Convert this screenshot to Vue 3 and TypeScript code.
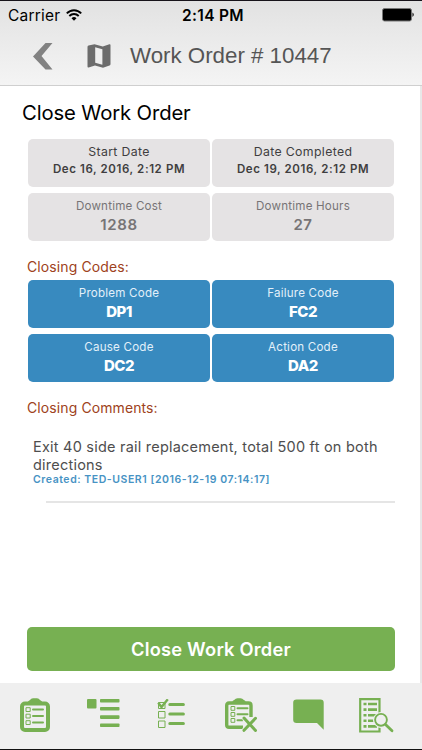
<script setup lang="ts">
interface Tile {
  label: string
  value: string
  kind: string
}

const details: Tile[] = [
  { label: 'Start Date', value: 'Dec 16, 2016, 2:12 PM', kind: 'date' },
  { label: 'Date Completed', value: 'Dec 19, 2016, 2:12 PM', kind: 'date' },
  { label: 'Downtime Cost', value: '1288', kind: 'metric' },
  { label: 'Downtime Hours', value: '27', kind: 'metric' },
]

const codes: Tile[] = [
  { label: 'Problem Code', value: 'DP1', kind: 'code' },
  { label: 'Failure Code', value: 'FC2', kind: 'code' },
  { label: 'Cause Code', value: 'DC2', kind: 'code' },
  { label: 'Action Code', value: 'DA2', kind: 'code' },
]
</script>

<template>
  <div class="screen">
    <header class="top">
      <div class="status">
        <div class="carrier">
          <span>Carrier</span>
          <svg width="16" height="12" viewBox="0 0 16 12" fill="none" stroke="#000" stroke-width="1.9">
            <path d="M.8 4.4C4.8.1 11.2.1 15.2 4.4" />
            <path d="M3.3 7C6 4.300 10 4.300 12.700 7" />
            <path d="M8 11.700 5.500 9.200Q8 7 10.500 9.200Z" fill="#000" stroke="none" />
          </svg>
        </div>
        <span class="clock">2:14 PM</span>
        <svg class="battery" width="33" height="14" viewBox="0 0 33 14">
          <rect x=".5" y=".5" width="29" height="12.500" rx="2" fill="#000" stroke="#777" />
          <path d="M30.500 4.500q2.500 2.200 0 4.500z" />
        </svg>
      </div>
      <div class="nav">
        <svg class="back" width="20" height="27" viewBox="0 0 20 27"><path d="M12.500 0H19.500L8.500 13 19.500 26.500H12.500L0 13.500z" fill="#828282" /></svg>
        <svg class="map" width="24" height="24" viewBox="0 0 24 24">
          <path d="M.5 3Q.5 2 1.500 1.600L7.500.3 15.800 2.500 22.400.2Q23.500 0 23.500 1V20Q23.500 21.200 22.500 21.600L16 23.700 8 21.400 1.600 23.500Q.5 23.700.5 22.500z" fill="#6c6c6c" />
          <path d="M8.200 3.200 15.400 5.300V20.800L8.200 18.800z" fill="#eee" />
        </svg>
        <h1>Work Order # 10447</h1>
      </div>
    </header>

    <main>
      <h2>Close Work Order</h2>
      <div class="tiles">
        <div v-for="t in details" :key="t.label" class="tile" :class="t.kind">
          <span class="label">{{ t.label }}</span>
          <b>{{ t.value }}</b>
        </div>
      </div>
      <h3 class="codes-title">Closing Codes:</h3>
      <div class="tiles">
        <div v-for="t in codes" :key="t.label" class="tile" :class="t.kind">
          <span class="label">{{ t.label }}</span>
          <b>{{ t.value }}</b>
        </div>
      </div>
      <h3 class="comments-title">Closing Comments:</h3>
      <article>
        <p>Exit 40 side rail replacement, total 500 ft on both directions</p>
        <small>Created: TED-USER1 [2016-12-19 07:14:17]</small>
      </article>
      <div class="divider"></div>
      <button type="button">Close Work Order</button>
    </main>

    <footer>
      <svg width="30" height="34" viewBox="0 0 30 34" fill="none" stroke="#77b052">
        <rect x="2" y="5.500" width="26" height="26.500" rx="3" stroke-width="4" />
        <path d="M7 6Q8 2.500 10 2Q11 .2 13 .2H17Q19 .2 20 2Q22 2.500 23 6z" fill="#77b052" stroke="none" />
        <path d="M6 9.700h4.200v3.800H6zM6 16.200h4.200V20H6zM6 22.700h4.200v3.800H6z" />
        <path d="M13 11.500h10M13 18h10M13 24.500h10" stroke-width="2" stroke-linecap="round" />
      </svg>
      <svg width="33" height="30" viewBox="0 0 33 30" fill="#77b052">
        <rect x="0" y="0" width="9.500" height="9.500" rx="1" />
        <rect x="13" y="0" width="19.500" height="3.600" rx=".8" />
        <rect x="13" y="8" width="19.500" height="3.600" rx=".8" />
        <rect x="13" y="16.300" width="19.500" height="3.600" rx=".8" />
        <rect x="13" y="24.500" width="19.500" height="3.600" rx=".8" />
      </svg>
      <svg width="28" height="30" viewBox="0 0 28 30" fill="none" stroke="#77b052">
        <path d="M1.500 3.500h6.500v6H1.500zM1.500 12.500h6.500v6.500H1.500zM1.500 22h6.500v6.500H1.500z" />
        <path d="M12.800 5.500h13.600M12.800 15h13.600M12.800 24.500h13.600" stroke-width="3" stroke-linecap="round" />
        <path d="M1.200 3.800 4.500 8 10.800.3" stroke-width="2.400" />
      </svg>
      <svg width="32" height="34" viewBox="0 0 32 34" fill="none" stroke="#77b052">
        <path d="M18 29.200H4Q1.700 29.200 1.700 27V7.500Q1.700 5 4 5H23.500Q26 5 26 7.500V19" stroke-width="3.400" />
        <path d="M7 5Q7.500 2.200 9.500 1.800Q10.500.2 12.500.2H15.500Q17.500.2 18.500 1.800Q20.500 2.200 21 5z" fill="#77b052" stroke="none" />
        <path d="M6 8.500h3.800v3.800H6zM6 14.500h3.800v3.800H6zM6 20.500h3.800v3.800H6z" />
        <path d="M12.500 10.300h10M12.500 16.300h10M12.500 22.300h5" stroke-width="2" stroke-linecap="round" />
        <path d="M19 20 31 32.500M30.500 20.300 19 32.300" stroke="#efefef" stroke-width="5" />
        <path d="M19 20 30.500 32.500M30.500 20.300 19 32.300" stroke-width="3" stroke-linecap="round" />
      </svg>
      <svg width="31" height="32" viewBox="0 0 31 32"><path d="M3.500.5H27.500Q30.700.5 30.700 3.500V30.800L24 24H3.500Q.2 24 .2 21V3.500Q.2.500 3.500.5z" fill="#77b052" /></svg>
      <svg width="35" height="35" viewBox="0 0 35 35" fill="none" stroke="#77b052">
        <path d="M1.200 1.200H20.500V33.500H1.200z" stroke-width="2.200" />
        <path d="M4.500 6h3M4.500 11.600h3M4.500 17.200h3M4.500 22.800h3M4.500 28.400h3M9 6h9M9 11.600h9M9 17.200h8M9 22.800h8M9 28.400h9" stroke-width="2.600" />
        <circle cx="22" cy="22" r="7.500" fill="#efefef" stroke="#efefef" />
        <path d="M26.500 26.500 33 32.700" stroke-width="2.800" stroke-linecap="round" />
        <circle cx="22" cy="21.800" r="5.900" stroke-width="1.900" />
      </svg>
    </footer>
  </div>
</template>

<style>
body {
  margin: 0;
}
</style>

<style scoped>
.screen {
  box-sizing: border-box;
  width: 422px;
  height: 750px;
  display: flex;
  flex-direction: column;
  overflow: hidden;
  background: #fff;
  border-top: 1px solid #17131a;
  border-bottom: 1px solid #111;
  font-family: Inter, sans-serif;
}
svg {
  display: block;
  flex: none;
}
h1, h2, h3, p {
  margin: 0;
  font-weight: 400;
}
.top {
  box-sizing: border-box;
  height: 85px;
  flex: none;
  background: linear-gradient(#e2e2e2, #f4f4f4);
  border-bottom: 1px solid #cfcfcf;
}
.status {
  display: grid;
  grid-template-columns: 1fr auto 1fr;
  align-items: center;
  height: 28px;
  padding: 0 7px 0 8px;
}
.carrier {
  display: flex;
  align-items: center;
  gap: 6px;
  font-size: 15.500px;
  letter-spacing: 0.200px;
}
.clock {
  font-size: 15.500px;
  font-weight: 600;
  letter-spacing: 0.300px;
  padding-left: 3px;
}
.battery {
  justify-self: end;
}
.nav {
  display: flex;
  align-items: center;
  height: 54px;
  padding-left: 33px;
}
.map {
  margin-left: 34px;
}
h1 {
  margin-left: 19px;
  font: 22.300px/30px "Liberation Sans", sans-serif;
  color: #555;
}
main {
  flex: 1;
  display: flex;
  flex-direction: column;
  padding: 14px 26px 0 27px;
  border-right: 2px solid #e8e8e8;
}
h2 {
  margin-left: -5px;
  height: 39px;
  font-size: 20.300px;
  line-height: 26px;
  letter-spacing: -0.130px;
}
.tiles {
  display: grid;
  grid-template-columns: 182px 182px;
  grid-auto-rows: 48px;
  gap: 6px 2px;
  padding-left: 1px;
}
.tile {
  display: flex;
  flex-direction: column;
  align-items: center;
  border-radius: 5px;
  background: #e5e3e4;
  color: #3f3e40;
}
.label {
  height: 18px;
  padding-top: 5px;
  font-size: 12.300px;
  line-height: 16px;
  letter-spacing: 0.350px;
}
.tile b {
  font-size: 11.500px;
  line-height: 14px;
  font-weight: 600;
  letter-spacing: 0.600px;
}
.metric {
  color: #777476;
}
.metric .label,
.code .label {
  font-size: 11.600px;
  letter-spacing: 0.200px;
}
.tile.metric b {
  font-size: 15px;
  line-height: 18px;
}
.code {
  background: #388abf;
  color: #e2f0fa;
}
.tile.code b {
  font-size: 15px;
  line-height: 18px;
  font-weight: 800;
  letter-spacing: -0.500px;
  color: #fff;
}
h3 {
  font-size: 14px;
  line-height: 20px;
  letter-spacing: 0.100px;
  color: #9e4220;
}
.codes-title {
  margin-top: 16px;
  height: 23px;
}
.comments-title {
  margin-top: 16px;
}
article {
  display: flex;
  flex-direction: column;
  margin: 20px 0 0 6px;
}
p {
  font-size: 14.500px;
  line-height: 17.500px;
  letter-spacing: 0.220px;
  color: #4e4e4e;
}
small {
  font-size: 10.500px;
  line-height: 13px;
  font-weight: 600;
  letter-spacing: 0.550px;
  color: #4793c4;
}
.divider {
  margin: 15px 0 0 19px;
  width: 349px;
  height: 2px;
  background: #e5e5e5;
}
button {
  margin-top: 124px;
  width: 368px;
  height: 44px;
  padding: 0;
  border: 0;
  border-radius: 5px;
  background: #77b052;
  color: #fff;
  font: 600 18.300px/44px Inter, sans-serif;
  letter-spacing: 0.200px;
}
footer {
  box-sizing: border-box;
  display: flex;
  align-items: flex-start;
  height: 66px;
  flex: none;
  gap: 36px;
  padding: 15px 0 0 20px;
  background: #efefef;
}
footer svg:nth-child(2),
footer svg:nth-child(3),
footer svg:nth-child(5) {
  margin-top: 1px;
}
footer svg:nth-child(2),
footer svg:nth-child(3) {
  margin-left: 1px;
}
footer svg:nth-child(4) {
  margin-left: 4px;
}
footer svg:nth-child(6) {
  margin-left: -1px;
}
</style>
